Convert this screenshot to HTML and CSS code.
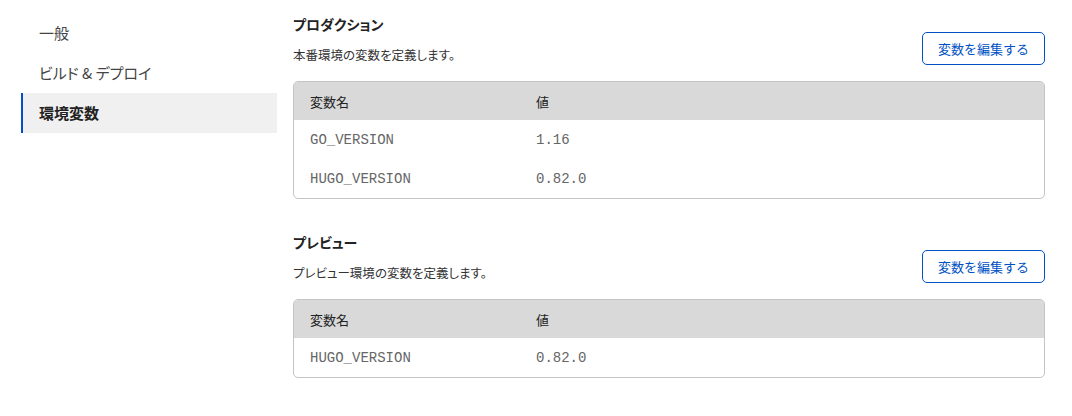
FILE: index.html
```html
<!DOCTYPE html>
<html lang="ja">
<head>
<meta charset="utf-8">
<link rel="stylesheet" href="styles.css">
</head>
<body>
<div class="layout">
  <nav class="sidebar">
    <div class="nav-item">一般</div>
    <div class="nav-item">ビルド &amp; デプロイ</div>
    <div class="nav-item active">環境変数</div>
  </nav>
  <main class="main">
    <section class="section">
      <div class="section-head">
        <div class="section-text">
          <h2 class="title">プロダクション</h2>
          <p class="desc">本番環境の変数を定義します。</p>
        </div>
        <button class="btn">変数を編集する</button>
      </div>
      <div class="table">
        <div class="row header"><div class="c1">変数名</div><div class="c2">値</div></div>
        <div class="row"><div class="c1 mono">GO_VERSION</div><div class="c2 mono">1.16</div></div>
        <div class="row"><div class="c1 mono">HUGO_VERSION</div><div class="c2 mono">0.82.0</div></div>
      </div>
    </section>
    <section class="section">
      <div class="section-head">
        <div class="section-text">
          <h2 class="title">プレビュー</h2>
          <p class="desc">プレビュー環境の変数を定義します。</p>
        </div>
        <button class="btn">変数を編集する</button>
      </div>
      <div class="table">
        <div class="row header"><div class="c1">変数名</div><div class="c2">値</div></div>
        <div class="row"><div class="c1 mono">HUGO_VERSION</div><div class="c2 mono">0.82.0</div></div>
      </div>
    </section>
  </main>
</div>
</body>
</html>
```
FILE: styles.css
```css
* { box-sizing: border-box; }
html, body { margin: 0; padding: 0; background: #fff; }
body {
  font-family: "Noto Sans CJK JP", "Noto Sans", sans-serif;
  color: #333;
  font-size: 14px;
  font-feature-settings: "palt";
}
.layout {
  display: flex;
  padding: 13px 27px 0 21px;
  gap: 16px;
}
.sidebar {
  width: 256px;
  flex: none;
  display: flex;
  flex-direction: column;
}
.nav-item {
  height: 40px;
  line-height: 40px;
  padding-left: 16px;
  font-size: 15px;
  color: #444;
  border-left: 2px solid transparent;
}
.nav-item.active {
  background: #f0f0f0;
  border-left-color: #0051c3;
  font-weight: bold;
  color: #222;
}
.main {
  flex: 1;
  display: flex;
  flex-direction: column;
  gap: 33px;
  padding-top: 1px;
}
.section-head {
  display: flex;
  justify-content: space-between;
  align-items: flex-start;
  margin-bottom: 16px;
}
.title {
  margin: 0;
  font-size: 14px;
  font-weight: bold;
  color: #222;
  line-height: 20px;
}
.desc {
  margin: 12px 0 0;
  font-size: 12.5px;
  color: #333;
  line-height: 18px;
}
.btn {
  margin-top: 18px;
  width: 123px;
  height: 33px;
  border: 1px solid #0051c3;
  border-radius: 5px;
  background: #fff;
  color: #0051c3;
  font-family: "Noto Sans CJK JP", "Noto Sans", sans-serif;
  font-size: 13px;
  padding: 0;
}
.table {
  border: 1px solid #c4c4c4;
  border-radius: 5px;
  overflow: hidden;
}
.row {
  display: flex;
  height: 39px;
  align-items: center;
}
.row.header {
  background: #d9d9d9;
  height: 38px;
  font-size: 13px;
  color: #222;
}
.c1 { width: 242px; padding-left: 16px; flex: none; }
.c2 { flex: 1; }
.mono {
  font-family: "Liberation Mono", "Courier New", monospace;
  font-size: 14px;
  color: #666;
}
```
